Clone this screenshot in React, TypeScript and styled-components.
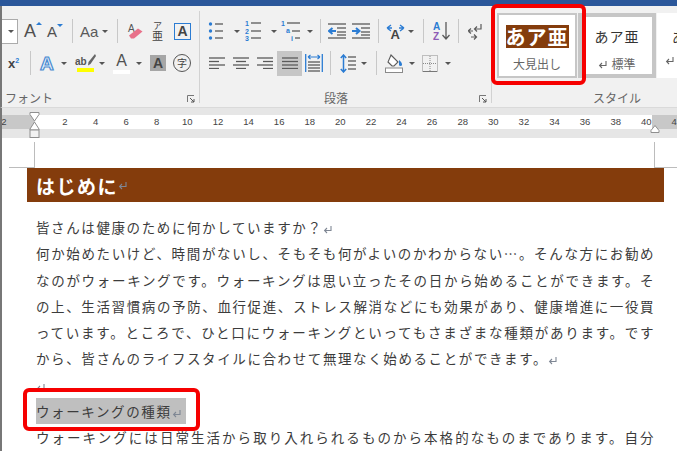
import React from "react";
import styled, { createGlobalStyle } from "styled-components";

const JP = `"Noto Sans CJK JP", "Liberation Sans", sans-serif`;

const GlobalStyle = createGlobalStyle`
  html, body { margin: 0; padding: 0; background: #fff; }
  * { box-sizing: border-box; }
`;

// small drawings used in the ribbon
const GREY = "#5a5a5a";
const BLUE = "#2b7cd3";

type Seg = [number, number, number];

const Lines = ({ segs, color = GREY }: { segs: Seg[]; color?: string }) => (
  <>
    {segs.map(([a, b, y], i) => (
      <line key={i} x1={a} x2={b} y1={y} y2={y} stroke={color} strokeWidth="1.3" />
    ))}
  </>
);

const Ico = ({ w, h, children }: { w: number; h: number; children: React.ReactNode }) => (
  <svg width={w} height={h} viewBox={`0 0 ${w} ${h}`} style={{ display: "block", flex: "none" }}>
    {children}
  </svg>
);

const ReturnMark = ({ color = "#7f8794" }: { color?: string }) => (
  <ReturnSvg width="10" height="9" viewBox="0 0 10 9">
    <path d="M8 1v4.500H2M4 3L1.600 5.500 4 8" fill="none" stroke={color} strokeWidth="1.100" />
  </ReturnSvg>
);

const Bullets = () => (
  <Ico w={15} h={20}>
    {[3, 10, 17].map((y) => <circle key={y} cx="2.500" cy={y} r="1.700" fill={BLUE} />)}
    <Lines segs={[[7, 15, 3], [7, 15, 10], [7, 15, 17]]} />
  </Ico>
);

const Numbered = () => (
  <Ico w={16} h={22}>
    {["1", "2", "3"].map((n, i) => (
      <text key={n} x="0" y={6 + i * 7.5} fontSize="7" fontWeight="700" fontFamily="Liberation Sans" fill={BLUE}>{n}</text>
    ))}
    <Lines segs={[[6, 16, 3], [6, 16, 11], [6, 16, 18]]} />
  </Ico>
);

const Multi = () => (
  <Ico w={20} h={22}>
    <text x="0" y="6" fontSize="7" fontWeight="700" fontFamily="Liberation Sans" fill={BLUE}>1</text>
    <text x="5" y="13" fontSize="7" fontWeight="700" fontFamily="Liberation Sans" fill={BLUE}>a</text>
    <text x="10" y="21" fontSize="7" fontWeight="700" fontFamily="Liberation Sans" fill={BLUE}>i</text>
    <Lines segs={[[6, 19, 3], [11, 19, 11], [14, 19, 18]]} />
  </Ico>
);

const Indent = ({ more }: { more?: boolean }) => (
  <Ico w={18} h={16}>
    <Lines segs={[[0, 18, 1], [9, 18, 5], [9, 18, 9], [9, 18, 12], [0, 18, 15]]} />
    <path
      d={more ? "M0 8h6M4 5l3.500 3L4 11" : "M8 8H2M4.500 5L1 8l3.500 3"}
      fill="none"
      stroke={BLUE}
      strokeWidth="2"
    />
  </Ico>
);

const TextDir = () => (
  <Ico w={19} h={19}>
    <path d="M1 6l4-3M1 6l4 3M18 6l-4-3M18 6l-4 3M2 6h4M13 6h4" fill="none" stroke={BLUE} strokeWidth="1.400" />
    <text x="4.500" y="17" fontSize="13" fontWeight="700" fontFamily="Liberation Sans" fill="#444">A</text>
  </Ico>
);

const SortAZ = () => (
  <Ico w={18} h={20}>
    <text x="0" y="9" fontSize="10" fontWeight="700" fontFamily="Liberation Sans" fill={BLUE}>A</text>
    <text x="0" y="19" fontSize="10" fontWeight="700" fontFamily="Liberation Sans" fill="#8e5bb5">Z</text>
    <path d="M13 1v17M9.500 14l3.500 4 3.500-4" fill="none" stroke={GREY} strokeWidth="1.300" />
  </Ico>
);

const Pilcrow = () => (
  <Ico w={14} h={17}>
    <path d="M13 1v5H7M9 3.500L6.500 6 9 8.500" fill="none" stroke={GREY} strokeWidth="1.200" />
    <path d="M0 8l3-2.500M0 8l3 2.500M1 8h4M3 14h5M6 11.500L8.500 14 6 16.500" fill="none" stroke={GREY} strokeWidth="1.200" />
  </Ico>
);

const Align = ({ segs }: { segs: Seg[] }) => (
  <Ico w={16} h={12}>
    <Lines segs={segs} />
  </Ico>
);

const Distributed = () => (
  <Ico w={18} h={18}>
    <path d="M.7 0v18M17.300 0v18" stroke={BLUE} strokeWidth="1.300" />
    <path d="M3 3h12M3 3l2.500-2M3 3l2.500 2M15 3l-2.500-2M15 3l-2.500 2" fill="none" stroke={BLUE} strokeWidth="1.100" />
    <Lines segs={[[3, 15, 8], [3, 15, 11], [3, 15, 14], [3, 15, 17]]} />
  </Ico>
);

const Spacing = () => (
  <Ico w={16} h={19}>
    <path d="M3.500 1v17M.8 4l2.700-3 2.700 3M.8 15l2.700 3 2.700-3" fill="none" stroke={BLUE} strokeWidth="1.500" />
    <Lines segs={[[8, 16, 3], [8, 16, 7], [8, 16, 11], [8, 16, 15]]} />
  </Ico>
);

const Shade = () => (
  <Ico w={18} h={19}>
    <path d="M6 1l7 7-4 4H7L3 8z" fill="#fff" stroke={GREY} strokeWidth="1.100" />
    <path d="M14 6c2 1.500 3 3 3 4.500a1.500 1.500 0 0 1-3 0z" fill={BLUE} />
    <rect x=".5" y="14" width="17" height="4.500" fill="#fff" stroke="#8a8a8a" />
  </Ico>
);

const Borders = () => (
  <Ico w={16} h={17}>
    <rect x=".5" y=".5" width="15" height="16" fill="none" stroke="#8a8a8a" strokeDasharray="1 1" />
    <path d="M8 1v15M1 8.500h14" stroke="#8a8a8a" strokeDasharray="1 1" />
    <path d="M1 16.500h14" stroke="#777" />
  </Ico>
);

const Eraser = () => (
  <Ico w={17} h={17}>
    <text x="1" y="9" fontSize="10" fontFamily="Liberation Sans" fill="#555">A</text>
    <path d="M2 12.500L11 5.500l4.500 3-8.500 7H4z" fill="#e8718a" />
  </Ico>
);

const Highlighter = () => (
  <Ico w={9} h={13}>
    <path d="M8 0l1 2-5.500 8L1 11.500 1.500 8z" fill="#666" />
  </Ico>
);

const Launcher = () => (
  <LauncherBox>
    <Ico w={8} h={8}>
      <path d="M.5 7V.5H7" fill="none" stroke="#777" />
      <path d="M3 3l4 4M7 4v3H4" fill="none" stroke="#555" />
    </Ico>
  </LauncherBox>
);

const App: React.FC = () => {
  const rulerMarks = ["2", "", "2", "4", "6", "8", "10", "12", "14", "16", "18", "20", "22", "24", "26", "28", "30", "32", "34", "36", "38", "40", "42"];

  return (
    <Screen>
      <GlobalStyle />
      <TitleStrip />
      <Ribbon>
        <Group $w={197}>
          <ToolRow>
            <SizeBox><Caret /></SizeBox>
            <Tool $ml={6} $w={16}>
              <BigA $size={18}>A<Nudge $dir="up" /></BigA>
            </Tool>
            <Tool $ml={7} $w={16}>
              <BigA $size={15}>A<Nudge $dir="down" /></BigA>
            </Tool>
            <Sep $ml={9} />
            <Tool $ml={7} $w={28}>
              <CaseText>Aa</CaseText>
              <Caret />
            </Tool>
            <Sep $ml={9} />
            <Tool $ml={9} $w={16}><Eraser /></Tool>
            <Tool $ml={9} $w={13}>
              <Ruby><small>ア</small><span>亜</span></Ruby>
            </Tool>
            <Tool $ml={9} $w={17}><BoxedA>A</BoxedA></Tool>
          </ToolRow>
          <ToolRow>
            <Tool $ml={6} $w={14}><Super>x<sup>2</sup></Super></Tool>
            <Sep $ml={8} />
            <Tool $ml={9} $w={27}>
              <OutlineA>A</OutlineA>
              <Caret />
            </Tool>
            <Tool $ml={8} $w={30}>
              <BarIcon $bar="#ffff00">
                <AbRow><em>ab</em><Highlighter /></AbRow>
              </BarIcon>
              <Caret />
            </Tool>
            <Tool $ml={8} $w={29}>
              <BarIcon $bar="#ffffff"><BigA $size={16}>A</BigA></BarIcon>
              <Caret />
            </Tool>
            <Tool $ml={8} $w={16}><ShadedA>A</ShadedA></Tool>
            <Tool $ml={7} $w={18}><Circled>字</Circled></Tool>
          </ToolRow>
          <GroupLabel $pad={3}>フォント<Launcher /></GroupLabel>
        </Group>
        <GroupDivider />

        <Group $w={291}>
          <ToolRow>
            <Tool $ml={8} $w={32}><Bullets /><Caret /></Tool>
            <Tool $ml={5} $w={32}><Numbered /><Caret /></Tool>
            <Tool $ml={4} $w={32}><Multi /><Caret /></Tool>
            <Sep $ml={7} />
            <Tool $ml={7} $w={18}><Indent /></Tool>
            <Tool $ml={6} $w={18}><Indent more /></Tool>
            <Sep $ml={8} />
            <Tool $ml={7} $w={28}><TextDir /><Caret /></Tool>
            <Sep $ml={9} />
            <Tool $ml={9} $w={18}><SortAZ /></Tool>
            <Sep $ml={7} />
            <Tool $ml={9} $w={14}><Pilcrow /></Tool>
          </ToolRow>
          <ToolRow>
            <Tool $ml={9} $w={16}><Align segs={[[0, 16, 1], [0, 10, 4.5], [0, 16, 8], [0, 10, 11.5]]} /></Tool>
            <Tool $ml={8} $w={16}><Align segs={[[0, 16, 1], [3, 13, 4.5], [0, 16, 8], [3, 13, 11.5]]} /></Tool>
            <Tool $ml={8} $w={16}><Align segs={[[0, 16, 1], [6, 16, 4.5], [0, 16, 8], [6, 16, 11.5]]} /></Tool>
            <ActiveTool>
              <Align segs={[[0, 16, 1], [0, 16, 4.5], [0, 16, 8], [0, 16, 11.5]]} />
            </ActiveTool>
            <Tool $ml={3} $w={18}><Distributed /></Tool>
            <Sep $ml={7} />
            <Tool $ml={9} $w={27}><Spacing /><Caret /></Tool>
            <Sep $ml={9} />
            <Tool $ml={8} $w={30}><Shade /><Caret /></Tool>
            <Tool $ml={7} $w={29}><Borders /><Caret /></Tool>
          </ToolRow>
          <GroupLabel $pad={124}>段落<Launcher /></GroupLabel>
        </Group>
        <GroupDivider />

        <StyleGroup>
          <Gallery>
            <StyleCard $w={80} $variant="plain">
              <HeadingSample>あア亜</HeadingSample>
              <StyleName>大見出し</StyleName>
            </StyleCard>
            <StyleCard $w={78} $variant="current">
              <NormalSample>あア亜</NormalSample>
              <StyleName><ReturnMark color="#666" />標準</StyleName>
            </StyleCard>
            <StyleCard $w={34} $variant="open">
              <NormalSample $shift={7}>あ</NormalSample>
              <StyleName><ReturnMark color="#666" /></StyleName>
            </StyleCard>
          </Gallery>
          <GroupLabel $pad={101}>スタイル</GroupLabel>
          <RedFrame $top={-2} $left={-1} $right={91} $bottom={22} />
        </StyleGroup>
      </Ribbon>

      <RulerBand>
        <RulerTrack>
          <RulerOff $w={33} />
          <RulerOn />
          <RulerOff $w={25} />
          <RulerNumbers>
            {rulerMarks.map((m, i) => <RulerNum key={i}>{m}</RulerNum>)}
          </RulerNumbers>
        </RulerTrack>
        <LeftIndent>
          <svg width="11" height="27" viewBox="0 0 11 27">
            <path d="M1 .5h9v2L5.500 9 1 2.500z" fill="#fff" stroke="#8f8f8f" />
            <path d="M5.500 10L10 17v1H1v-1z" fill="#fff" stroke="#8f8f8f" />
            <rect x="1" y="18" width="9" height="7.500" fill="#f1f1f1" stroke="#8f8f8f" />
          </svg>
        </LeftIndent>
        <RightIndent>
          <svg width="10" height="8" viewBox="0 0 10 8">
            <path d="M5 .5l4 5v2H1v-2z" fill="#fff" stroke="#8f8f8f" />
          </svg>
        </RightIndent>
      </RulerBand>

      <Page>
        <CropRow>
          <CropLeft />
          <CropRight />
        </CropRow>
        <HeadingBar>はじめに<ReturnMark /></HeadingBar>
        <Body>
          <Line>皆さんは健康のために何かしていますか？<ReturnMark /></Line>
          <Line $fill>何か始めたいけど、時間がないし、そもそも何がよいのかわからない…。そんな方にお勧め</Line>
          <Line $fill>なのがウォーキングです。ウォーキングは思い立ったその日から始めることができます。そ</Line>
          <Line $fill>の上、生活習慣病の予防、血行促進、ストレス解消などにも効果があり、健康増進に一役買</Line>
          <Line $fill>っています。ところで、ひと口にウォーキングといってもさまざまな種類があります。です</Line>
          <Line>から、皆さんのライフスタイルに合わせて無理なく始めることができます。<ReturnMark /></Line>
          <Line><ReturnMark /></Line>
          <Line>
            <Selected>
              ウォーキングの種類<ReturnMark />
              <RedFrame $top={-10} $left={-13} $right={-14} $bottom={-7} />
            </Selected>
          </Line>
          <Line $fill>ウォーキングには日常生活から取り入れられるものから本格的なものまであります。自分</Line>
        </Body>
      </Page>
    </Screen>
  );
};

const Screen = styled.div`
  width: 677px;
  height: 451px;
  overflow: hidden;
  display: flex;
  flex-direction: column;
  position: relative;
  font-family: ${JP};
  background: #fff;
`;

const TitleStrip = styled.div`
  height: 6px;
  flex: none;
  background: #2b579a;
`;

const Ribbon = styled.div`
  height: 102px;
  flex: none;
  display: flex;
  background: #f1f1f1;
  border-left: 2px solid #777;
  border-bottom: 1px solid #dadada;
`;

const Group = styled.div<{ $w: number }>`
  width: ${(p) => p.$w}px;
  flex: none;
  display: flex;
  flex-direction: column;
  padding-top: 9px;
`;

const GroupDivider = styled.div`
  width: 1px;
  height: 92px;
  margin-top: 5px;
  flex: none;
  background: #d2d2d2;
`;

const ToolRow = styled.div`
  height: 32px;
  flex: none;
  display: flex;
  align-items: center;
`;

const Tool = styled.div<{ $ml: number; $w: number }>`
  margin-left: ${(p) => p.$ml}px;
  width: ${(p) => p.$w}px;
  flex: none;
  display: flex;
  align-items: center;
  justify-content: space-between;
`;

const ActiveTool = styled.div`
  width: 25px;
  height: 25px;
  margin-left: 4px;
  flex: none;
  display: flex;
  align-items: center;
  justify-content: center;
  background: #c6c6c6;
`;

const Sep = styled.div<{ $ml: number }>`
  width: 1px;
  height: 24px;
  margin-left: ${(p) => p.$ml}px;
  flex: none;
  background: #c8c8c8;
`;

const Caret = styled.span`
  width: 0;
  height: 0;
  flex: none;
  border-left: 3px solid transparent;
  border-right: 3px solid transparent;
  border-top: 3px solid #555;
`;

const SizeBox = styled.div`
  width: 16px;
  height: 25px;
  flex: none;
  display: flex;
  align-items: center;
  justify-content: flex-end;
  padding-right: 3px;
  background: #fff;
  border: 1px solid #ababab;
  border-left: none;
`;

const BigA = styled.span<{ $size: number }>`
  position: relative;
  display: block;
  font: ${(p) => p.$size}px/1 "Liberation Sans", sans-serif;
  color: #505050;
`;

const Nudge = styled.i<{ $dir: "up" | "down" }>`
  position: absolute;
  top: 0;
  right: -6px;
  width: 0;
  height: 0;
  border-left: 3px solid transparent;
  border-right: 3px solid transparent;
  ${(p) => (p.$dir === "up" ? `border-bottom: 3px solid ${BLUE};` : `border-top: 3px solid ${BLUE};`)}
`;

const CaseText = styled.span`
  font: 15px/1 "Liberation Sans", sans-serif;
  color: #5a5a5a;
`;

const Ruby = styled.div`
  display: flex;
  flex-direction: column;
  align-items: center;
  color: #444;
  small {
    display: block;
    height: 9px;
    font-size: 9px;
    line-height: 9px;
  }
  span {
    display: block;
    height: 11px;
    font-size: 11px;
    line-height: 11px;
  }
`;

const BoxedA = styled.div`
  width: 17px;
  height: 17px;
  display: flex;
  align-items: center;
  justify-content: center;
  border: 1.5px solid ${BLUE};
  font: 700 14px/1 "Liberation Sans", sans-serif;
  color: #444;
`;

const Super = styled.div`
  font: 700 13px/1 "Liberation Sans", sans-serif;
  color: #444;
  sup {
    font-size: 7px;
    color: ${BLUE};
    vertical-align: 5px;
    line-height: 0;
  }
`;

const OutlineA = styled.span`
  font: 700 19px/1 "Liberation Sans", sans-serif;
  color: #e8f1fb;
  -webkit-text-stroke: 1.2px #4a8ad0;
`;

const BarIcon = styled.div<{ $bar: string }>`
  display: flex;
  flex-direction: column;
  align-items: center;
  min-width: 16px;
  &::after {
    content: "";
    display: block;
    width: 17px;
    height: 4px;
    margin-top: 1px;
    background: ${(p) => p.$bar};
  }
`;

const AbRow = styled.div`
  display: flex;
  align-items: flex-end;
  em {
    font: 700 10px/1 "Liberation Sans", sans-serif;
    color: #555;
  }
`;

const ShadedA = styled.div`
  width: 16px;
  height: 16px;
  display: flex;
  align-items: center;
  justify-content: center;
  background: #a6a6a6;
  font: 700 14px/1 "Liberation Sans", sans-serif;
  color: #444;
`;

const Circled = styled.div`
  width: 18px;
  height: 18px;
  display: flex;
  align-items: center;
  justify-content: center;
  border: 1.3px solid #555;
  border-radius: 50%;
  font-size: 10px;
  line-height: 1;
  color: #444;
`;

const GroupLabel = styled.div<{ $pad: number }>`
  position: relative;
  height: 18px;
  margin-top: auto;
  padding-left: ${(p) => p.$pad}px;
  font-size: 12px;
  line-height: 18px;
  color: #666;
`;

const LauncherBox = styled.span`
  position: absolute;
  top: 6px;
  right: 4px;
`;

const StyleGroup = styled.div`
  position: relative;
  flex: 1;
  min-width: 0;
  display: flex;
  flex-direction: column;
  padding-top: 7px;
`;

const Gallery = styled.div`
  display: flex;
  height: 65px;
  margin-left: 5px;
  gap: 1px;
`;

const StyleCard = styled.div<{ $w: number; $variant: "plain" | "current" | "open" }>`
  width: ${(p) => p.$w}px;
  flex: none;
  display: flex;
  flex-direction: column;
  align-items: ${(p) => (p.$variant === "open" ? "flex-start" : "center")};
  background: #fff;
  border: ${(p) =>
    p.$variant === "plain" ? "2px solid #c6c6c6" : p.$variant === "current" ? "4px solid #c6c6c6" : "none"};
  padding-top: ${(p) => (p.$variant === "plain" ? "10px" : p.$variant === "current" ? "8px" : "12px")};
  padding-left: ${(p) => (p.$variant === "open" ? "8px" : "0")};
`;

const HeadingSample = styled.div`
  width: 63px;
  height: 23px;
  text-align: center;
  background: #843c0c;
  color: #fff;
  font-size: 20px;
  font-weight: 700;
  line-height: 23px;
  letter-spacing: 1px;
  white-space: nowrap;
`;

const NormalSample = styled.div<{ $shift?: number }>`
  height: 23px;
  margin-left: ${(p) => p.$shift ?? 0}px;
  color: #333;
  font-size: 14px;
  line-height: 23px;
  letter-spacing: 1px;
  white-space: nowrap;
`;

const StyleName = styled.div`
  margin-top: 8px;
  display: flex;
  align-items: center;
  gap: 3px;
  color: #666;
  font-size: 12px;
  line-height: 16px;
  white-space: nowrap;
`;

const RedFrame = styled.span<{ $top: number; $left: number; $right: number; $bottom: number }>`
  position: absolute;
  top: ${(p) => p.$top}px;
  left: ${(p) => p.$left}px;
  right: ${(p) => p.$right}px;
  bottom: ${(p) => p.$bottom}px;
  border: 4px solid #f60000;
  border-radius: 6px;
  pointer-events: none;
`;

const RulerBand = styled.div`
  position: relative;
  height: 30px;
  flex: none;
  padding-top: 7px;
  background: #e6e6e6;
  border-left: 2px solid #777;
`;

const RulerTrack = styled.div`
  position: relative;
  height: 14px;
  display: flex;
  overflow: hidden;
`;

const RulerOff = styled.div<{ $w: number }>`
  width: ${(p) => p.$w}px;
  flex: none;
  background: #c8c8c8;
`;

const RulerOn = styled.div`
  flex: 1;
  background: #fff;
`;

const RulerNumbers = styled.div`
  position: absolute;
  top: 0;
  left: -13.5px;
  display: flex;
`;

const RulerNum = styled.span`
  width: 30.6px;
  flex: none;
  text-align: center;
  font: 9.5px/14px "Liberation Sans", sans-serif;
  color: #444;
`;

const LeftIndent = styled.div`
  position: absolute;
  top: 4px;
  left: 27px;
  line-height: 0;
`;

const RightIndent = styled.div`
  position: absolute;
  top: 17px;
  left: 648px;
  line-height: 0;
`;

const Page = styled.div`
  flex: 1;
  min-height: 0;
  background: #fff;
  border-left: 2px solid #777;
`;

const CropRow = styled.div`
  height: 30px;
  display: flex;
  justify-content: space-between;
  padding: 4px 0 0 7px;
`;

const CropLeft = styled.div`
  width: 26px;
  height: 26px;
  border-right: 1px solid #bcbcbc;
  border-bottom: 1px solid #bcbcbc;
`;

const CropRight = styled.div`
  width: 23px;
  height: 26px;
  border-left: 1px solid #bcbcbc;
  border-bottom: 1px solid #bcbcbc;
`;

const HeadingBar = styled.div`
  height: 34px;
  margin: 0 13px 0 25px;
  padding-left: 9px;
  display: flex;
  align-items: center;
  background: #843c0c;
  color: #fff;
  font-size: 19px;
  font-weight: 700;
  letter-spacing: 1.5px;
`;

const Body = styled.div`
  padding: 12px 22px 0 34px;
`;

const Line = styled.div<{ $fill?: boolean }>`
  height: 26.3px;
  font-size: 13.5px;
  line-height: 26.3px;
  letter-spacing: ${(p) => (p.$fill ? "1.4px" : "1.6px")};
  color: #3c3c3c;
  ${(p) => p.$fill && "text-align: justify; text-align-last: justify;"}
`;

const Selected = styled.span`
  position: relative;
  display: inline-block;
  height: 26px;
  padding-right: 4px;
  background: #bfbfbf;
`;

const ReturnSvg = styled.svg`
  display: inline-block;
  flex: none;
  vertical-align: -1px;
`;

export default App;
